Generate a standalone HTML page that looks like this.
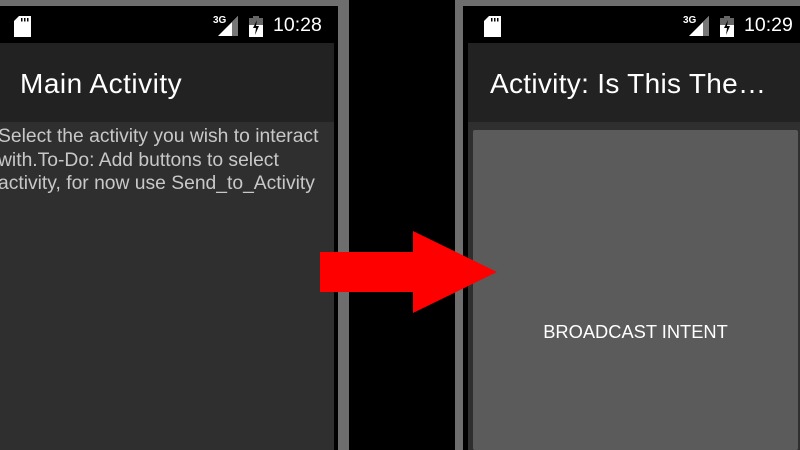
<!DOCTYPE html>
<html><head><meta charset="utf-8"><style>
*{margin:0;padding:0;box-sizing:border-box}
body{width:800px;height:450px;background:#000;position:relative;overflow:hidden;font-family:"Liberation Sans",Roboto,sans-serif}
.a{position:absolute}
.t{color:#fff;font-size:28px;letter-spacing:0.3px;white-space:nowrap}
.time{color:#fff;font-size:19.5px;position:absolute;top:14px}
</style></head><body>
<div class="a" style="left:0;top:0;width:349px;height:450px;background:#6e6e6e"></div>
<div class="a" style="left:0;top:6px;width:338px;height:444px;background:#000"></div>
<div class="a" style="left:0;top:43px;width:334px;height:80px;background:#222"></div>
<div class="a" style="left:0;top:122px;width:334px;height:328px;background:#2f2f2f"></div>
<div class="a t" style="left:20px;top:68px;letter-spacing:0.5px">Main Activity</div>
<div class="a" style="left:-2px;top:125px;width:336px;color:#c8c8c8;font-size:19.3px;line-height:23.5px;white-space:nowrap">Select the activity you wish to interact<br>with.To-Do: Add buttons to select<br>activity, for now use Send_to_Activity</div>
<svg class="a" style="left:14px;top:16px" width="17" height="21" viewBox="0 0 17 21"><path d="M5 0H17V21H0V5Z" fill="#fff"/><rect x="7" y="2" width="1.5" height="3.5" fill="#000"/><rect x="10" y="2" width="1.5" height="3.5" fill="#000"/><rect x="13" y="2" width="1.5" height="3.5" fill="#000"/></svg>
<div class="a" style="left:213px;top:15px;color:#fff;font-size:10px;font-weight:bold">3G</div>
<svg class="a" style="left:218px;top:16px" width="20" height="20"><path d="M20 0V20H0Z" fill="#fff"/><path d="M20 0V20H14V6Z" fill="#777"/></svg>
<svg class="a" style="left:249px;top:16px" width="14" height="21"><rect x="4" y="0" width="6" height="3" fill="#666"/><rect x="0" y="2" width="14" height="19" fill="#666"/><rect x="0" y="9" width="14" height="12" fill="#fff"/><path d="M8 4L4 12H7L6 19L10 10H7Z" fill="#000"/></svg>
<div class="time" style="left:273px">10:28</div>
<div class="a" style="left:455px;top:0;width:345px;height:450px;background:#6e6e6e"></div>
<div class="a" style="left:463px;top:6px;width:337px;height:444px;background:#000"></div>
<div class="a" style="left:468px;top:43px;width:332px;height:80px;background:#222"></div>
<div class="a" style="left:468px;top:122px;width:332px;height:328px;background:#2f2f2f"></div>
<div class="a" style="left:473px;top:130px;width:325px;height:320px;background:#5b5b5b;border-radius:2px"></div>
<div class="a t" style="left:490px;top:68px">Activity: Is This The…</div>
<div class="a" style="left:473px;top:321px;width:325px;text-align:center;color:#fff;font-size:18.3px">BROADCAST INTENT</div>
<svg class="a" style="left:484px;top:16px" width="17" height="21" viewBox="0 0 17 21"><path d="M5 0H17V21H0V5Z" fill="#fff"/><rect x="7" y="2" width="1.5" height="3.5" fill="#000"/><rect x="10" y="2" width="1.5" height="3.5" fill="#000"/><rect x="13" y="2" width="1.5" height="3.5" fill="#000"/></svg>
<div class="a" style="left:683px;top:15px;color:#fff;font-size:10px;font-weight:bold">3G</div>
<svg class="a" style="left:689px;top:16px" width="20" height="20"><path d="M20 0V20H0Z" fill="#fff"/><path d="M20 0V20H14V6Z" fill="#777"/></svg>
<svg class="a" style="left:720px;top:16px" width="14" height="21"><rect x="4" y="0" width="6" height="3" fill="#666"/><rect x="0" y="2" width="14" height="19" fill="#666"/><rect x="0" y="9" width="14" height="12" fill="#fff"/><path d="M8 4L4 12H7L6 19L10 10H7Z" fill="#000"/></svg>
<div class="time" style="left:744px">10:29</div>
<svg class="a" style="left:0;top:0" width="800" height="450"><path d="M320 252H413V231L497 272L413 313V292H320Z" fill="#f00"/></svg>
</body></html>
